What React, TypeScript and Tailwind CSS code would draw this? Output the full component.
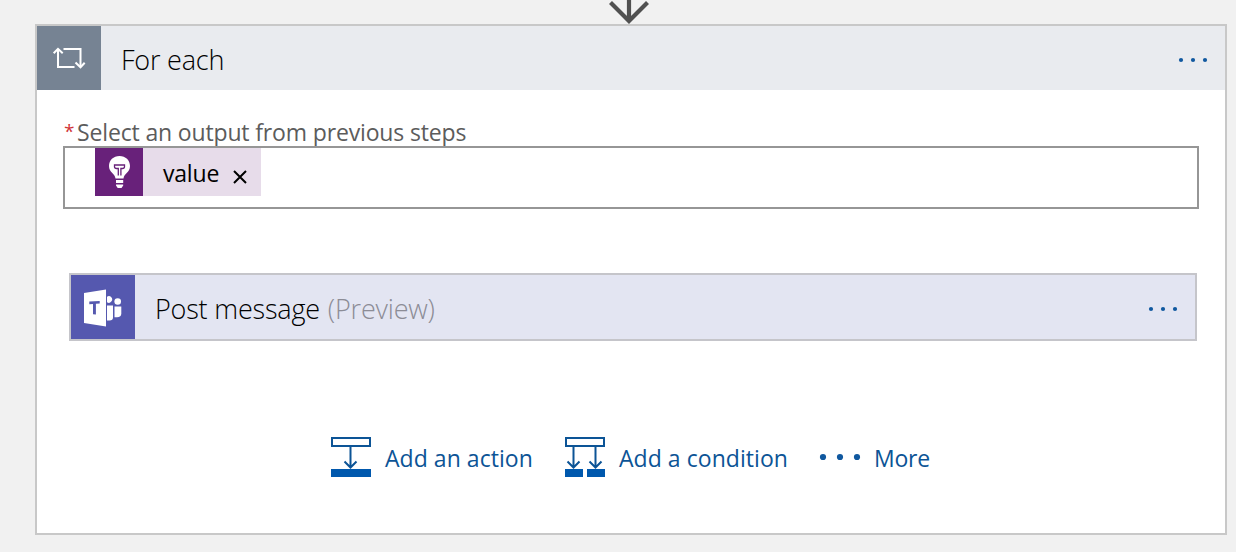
import React from "react";

function Dots({ gap, size = 4 }: { gap: number; size?: number }) {
  const w = gap * 2 + size;
  const r = size / 2;
  return (
    <svg width={w} height={size} viewBox={`0 0 ${w} ${size}`} className="block shrink-0 overflow-visible fill-[#10589f]">
      <circle cx={r} cy={r} r={r + 0.1} />
      <circle cx={r + gap} cy={r} r={r + 0.1} />
      <circle cx={r + gap * 2} cy={r} r={r + 0.1} />
    </svg>
  );
}

function LoopIcon() {
  return (
    <svg width="64" height="64" viewBox="0 0 64 64" fill="none" stroke="#fff" strokeWidth="2">
      <path d="M26.500 23H43.500V41" />
      <path d="M38.500 36.500L43.500 41.300L47.700 36.800" />
      <path d="M37.500 41H21V23.500" />
      <path d="M16.700 27.300L21 22.800L25.700 27.300" />
    </svg>
  );
}

function BulbIcon() {
  return (
    <svg width="48" height="48" viewBox="0 0 48 48">
      <path fill="#fff" d="M24.500 8C18.400 8 14 12.300 14 18C14 24.500 20 25.500 20.500 30.500H28.500C29 25.500 35 24.500 35 18C35 12.300 30.600 8 24.500 8Z" />
      <path d="M23.300 27.500V20.500H21.500Q19.500 20.500 19.500 18.700V17H29.500V18.700Q29.500 20.500 27.500 20.500H25.900V27.500" fill="none" stroke="#68217a" strokeWidth="1.300" />
      <path fill="#fff" d="M21 32H28.200V35H21ZM21 36.400H28.200V37.500L26.500 40H22.700L21 37.500Z" />
    </svg>
  );
}

function TeamsIcon() {
  return (
    <svg width="64" height="64" viewBox="0 0 64 64" fill="#fff">
      <path d="M13 18L35 14.500V51.500L13 48Z" />
      <path d="M18.300 26.600L28.700 26V28.600L24.900 28.800V39.400L22 39.200V29L18.300 29.200Z" fill="#5558af" />
      <path d="M36 21.700A3.300 3.300 0 1 1 36 27.200ZM36 30.500H42V42.500Q42 45.500 38.500 45.500H36Z" />
      <circle cx="46.700" cy="26.500" r="3.300" />
      <path d="M43.500 31.500H50.300V38.500Q50.300 42.300 46 42.300H43.500Z" />
    </svg>
  );
}

function ActionIcon() {
  return (
    <svg width="40" height="40" viewBox="0 0 40 40" fill="none" stroke="#0c5496" strokeWidth="2" className="shrink-0">
      <rect x="1" y="1" width="38" height="8" />
      <path d="M19.500 10V30M13.500 24.500L19.500 30.500L25.500 24.500" />
      <rect y="32" width="40" height="8" fill="#0058ad" stroke="none" />
    </svg>
  );
}

function ConditionIcon() {
  return (
    <svg width="40" height="40" viewBox="0 0 40 40" fill="none" stroke="#0c5496" strokeWidth="2" className="shrink-0">
      <rect x="1" y="1" width="38" height="8" />
      <path d="M8.500 10V30M2.500 24.500L8.500 30.500L14.500 24.500M30.500 10V30M24.500 24.500L30.500 30.500L36.500 24.500" />
      <path d="M0 32H18V40H0ZM22 32H40V40H22Z" fill="#0058ad" stroke="none" />
    </svg>
  );
}

export default function App() {
  return (
    <div className="flex h-[552px] w-[1236px] flex-col overflow-hidden bg-[#f1f1f1] pl-[35px] font-['Open_Sans','Noto_Sans',sans-serif] whitespace-nowrap">
      <svg width="40" height="24" viewBox="0 0 40 24" fill="none" stroke="#505050" strokeWidth="4.200" className="ml-[574px] shrink-0">
        <path d="M20 0V21M1.500 2.500L20 21L38.500 2.500" />
      </svg>
      <section className="flex h-[511px] w-[1192px] shrink-0 flex-col border-2 border-[#c8c8c8] bg-white">
        <header className="flex h-16 shrink-0 items-center bg-[#e9ebef] pr-[18px]">
          <div className="size-16 bg-[#768393]">
            <LoopIcon />
          </div>
          <h1 className="mt-[3px] ml-5 flex-1 text-[27px] leading-8 font-light tracking-[-0.2px] text-black">For each</h1>
          <div className="mt-1"><Dots gap={12} /></div>
        </header>
        <div className="mt-[27px] flex h-[30px] w-fit pl-[27px] text-[23px] leading-[30px] tracking-[-0.15px] text-[#5c5c5c]">
          <span className="w-[13px] text-[19px] leading-[28px] text-[#d13438]">*</span>
          <span>Select an output from previous steps</span>
        </div>
        <div className="-mt-px ml-[26px] h-[63px] w-[1136px] shrink-0 border-2 border-[#969696] pl-[30px]">
          <div className="flex h-12 w-[166px] items-center bg-[#e7dcea]">
            <div className="size-12 bg-[#68217a]">
              <BulbIcon />
            </div>
            <span className="mt-[2px] ml-5 w-[70px] text-[23px] leading-8 tracking-[-0.2px] text-black">value</span>
            <svg width="14" height="14" viewBox="0 0 14 14" stroke="#000" strokeWidth="2" className="mt-[10px]">
              <path d="M1 1L13 13M13 1L1 13" />
            </svg>
          </div>
        </div>
        <div className="mt-16 ml-8 flex h-[68px] w-[1128px] shrink-0 items-center border-2 border-[#c5c5ca] bg-[#e3e5f2] pr-[18px]">
          <div className="size-16 bg-[#5558af]">
            <TeamsIcon />
          </div>
          <h2 className="mt-[3px] ml-5 flex flex-1 gap-2 text-[27px] leading-8 font-light tracking-[-0.2px] text-black">
            <span>Post message</span>
            <span className="text-[#8c8c96]">(Preview)</span>
          </h2>
          <div className="mt-1"><Dots gap={12} /></div>
        </div>
        <div className="mt-24 ml-[294px] flex h-10 shrink-0 items-center text-[23px] leading-8 text-[#0c5496]">
          <ActionIcon />
          <span className="mt-[2px] ml-[14px] w-[180px] tracking-[0.05px]">Add an action</span>
          <ConditionIcon />
          <span className="mt-[2px] ml-[14px] w-[201px] tracking-[0.05px]">Add a condition</span>
          <Dots gap={17} size={6} />
          <span className="mt-[2px] ml-[14px] tracking-[-0.2px]">More</span>
        </div>
      </section>
    </div>
  );
}
